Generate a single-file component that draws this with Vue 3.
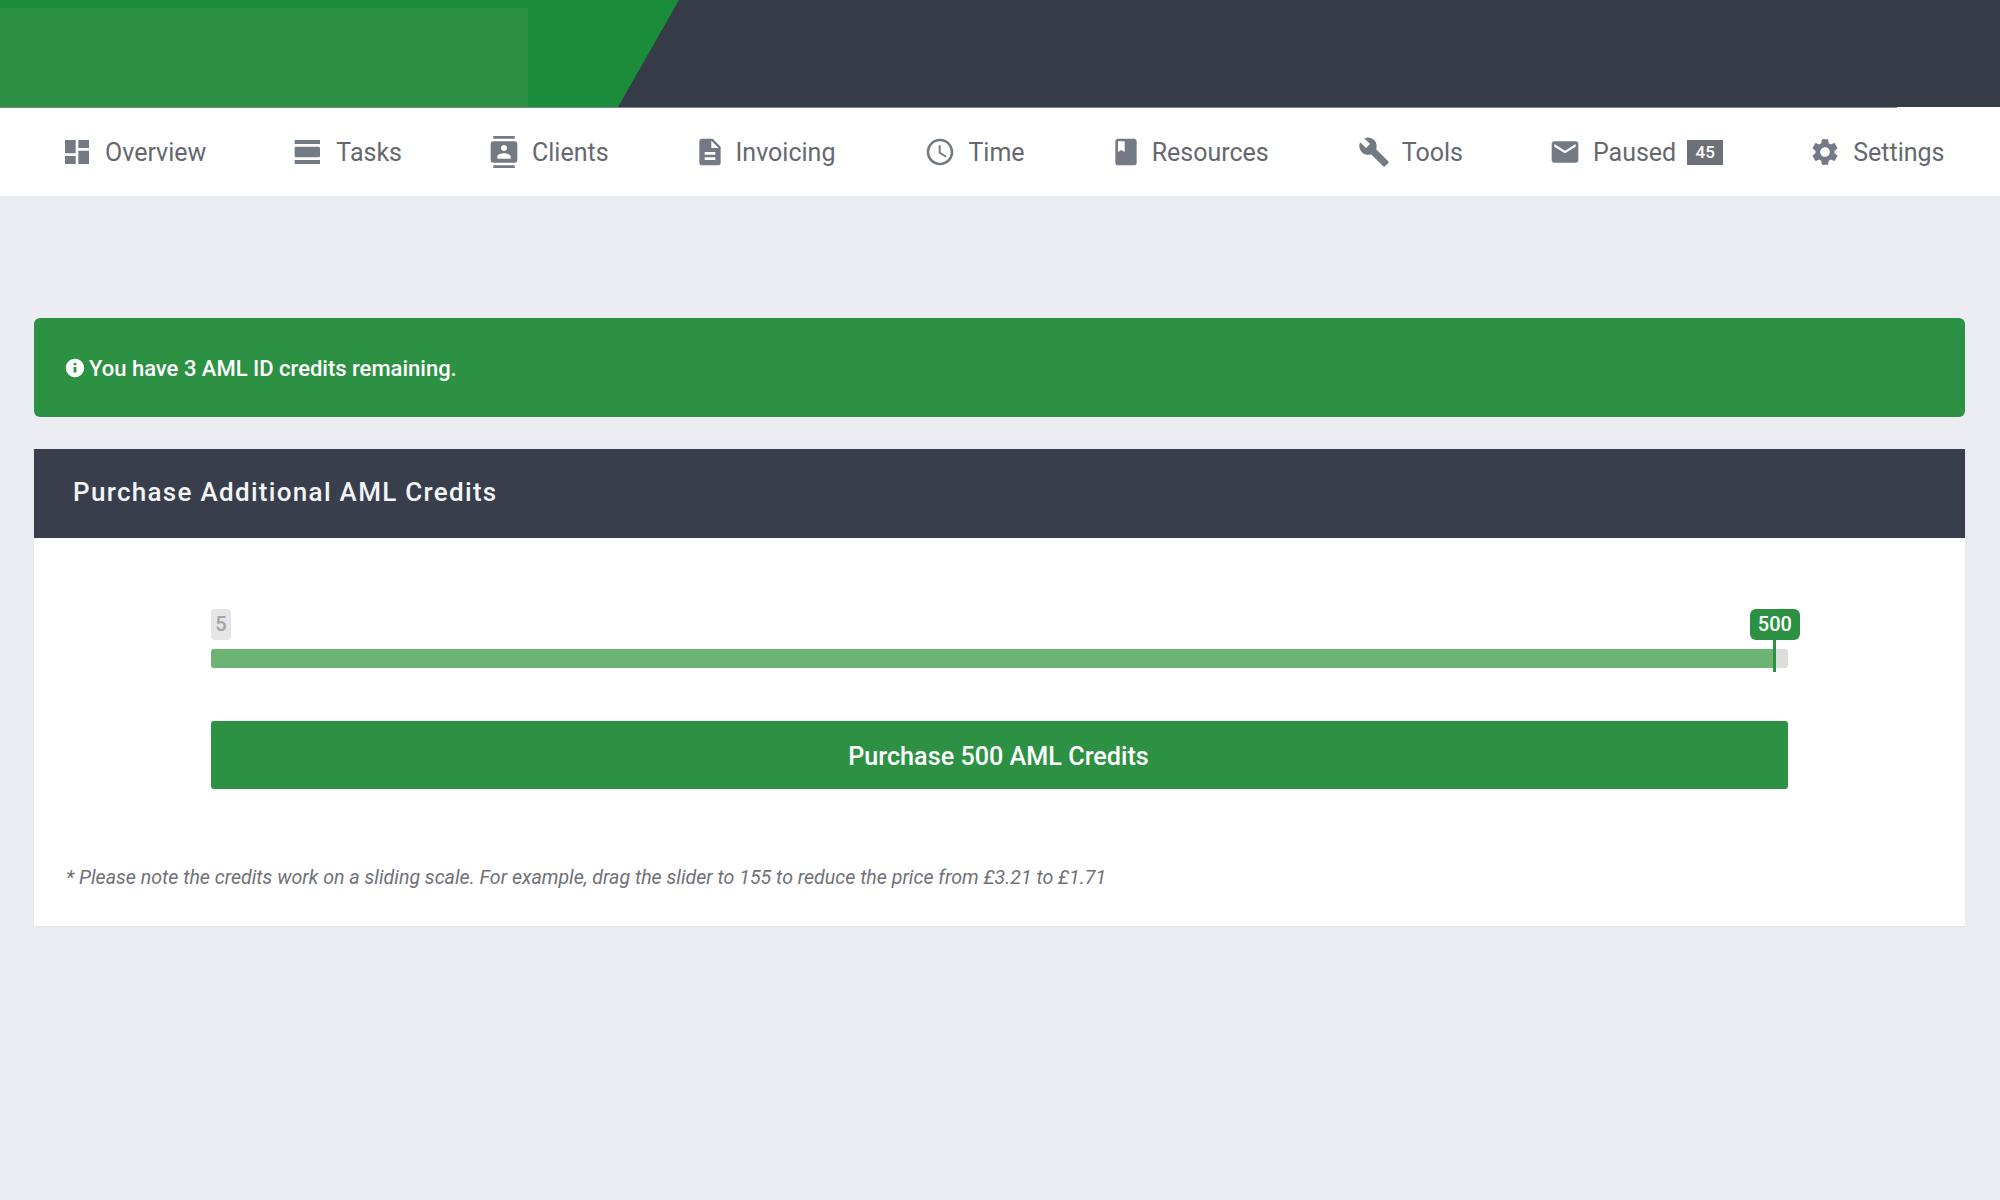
<template>
  <div class="page">
    <header class="top">
      <div class="top__brand">
        <div class="top__logo"></div>
      </div>
    </header>
    <div class="top__line"></div>

    <nav class="nav">
      <a
        v-for="item in navItems"
        :key="item.label"
        class="nav__item"
        :class="{ 'nav__item--narrow': item.narrow }"
      >
        <svg class="nav__icon" viewBox="0 0 24 24"><path :d="item.icon" /></svg>
        <span>{{ item.label }}</span>
        <span v-if="item.badge" class="nav__badge">{{ item.badge }}</span>
      </a>
    </nav>

    <main class="content">
      <div class="alert">
        <svg class="alert__icon" viewBox="0 0 24 24">
          <path d="M12 2C6.48 2 2 6.48 2 12s4.48 10 10 10 10-4.48 10-10S17.52 2 12 2zm1.5 15h-3v-6h3v6zm0-8h-3V6.5h3V9z" />
        </svg>
        <span>You have {{ credits }} AML ID credits remaining.</span>
      </div>

      <section class="card">
        <h2 class="card__title">Purchase Additional AML Credits</h2>
        <div class="card__body">
          <div class="slider">
            <div class="slider__labels">
              <span class="slider__min">{{ min }}</span>
            </div>
            <div class="slider__track">
              <div class="slider__fill" :style="{ width: percent + '%' }"></div>
              <div class="slider__handle" :style="{ left: percent + '%' }">
                <span class="slider__value">{{ value }}</span>
              </div>
            </div>
          </div>
          <button class="buy">Purchase {{ value }} AML Credits</button>
          <p class="note">
            * Please note the credits work on a sliding scale. For example, drag
            the slider to 155 to reduce the price from £3.21 to £1.71
          </p>
        </div>
      </section>
    </main>
  </div>
</template>

<script setup>
import { ref } from "vue";

const credits = ref(3);
const min = ref(5);
const value = ref(500);
const percent = ref(99.2);

const navItems = [
  {
    label: "Overview",
    icon: "M3 13h8V3H3v10zm0 8h8v-6H3v6zm10 0h8V11h-8v10zm0-18v6h8V3h-8z",
  },
  {
    label: "Tasks",
    icon: "M2 21h19v-3H2v3zM20 8H3c-.55 0-1 .45-1 1v6c0 .55.45 1 1 1h17c.55 0 1-.45 1-1V9c0-.55-.45-1-1-1zM2 3v3h19V3H2z",
  },
  {
    label: "Clients",
    icon: "M20 0H4v2h16V0zM4 24h16v-2H4v2zM20 4H4c-1.1 0-2 .9-2 2v12c0 1.1.9 2 2 2h16c1.1 0 2-.9 2-2V6c0-1.1-.9-2-2-2zm-8 2.75c1.24 0 2.25 1.01 2.25 2.25s-1.01 2.25-2.25 2.25S9.75 10.24 9.75 9 10.76 6.75 12 6.75zM17 17H7v-1.5c0-1.67 3.33-2.5 5-2.5s5 .83 5 2.5V17z",
  },
  {
    label: "Invoicing",
    narrow: true,
    icon: "M14 2H6c-1.1 0-1.99.9-1.99 2L4 20c0 1.1.89 2 1.99 2H18c1.1 0 2-.9 2-2V8l-6-6zm2 16H8v-2h8v2zm0-4H8v-2h8v2zm-3-5V3.5L18.5 9H13z",
  },
  {
    label: "Time",
    icon: "M11.99 2C6.47 2 2 6.48 2 12s4.47 10 9.99 10C17.52 22 22 17.52 22 12S17.52 2 11.99 2zM12 20c-4.42 0-8-3.58-8-8s3.58-8 8-8 8 3.58 8 8-3.58 8-8 8zM12.5 7H11v6l5.25 3.15.75-1.23-4.5-2.67z",
  },
  {
    label: "Resources",
    narrow: true,
    icon: "M18 2H6c-1.1 0-2 .9-2 2v16c0 1.1.9 2 2 2h12c1.1 0 2-.9 2-2V4c0-1.1-.9-2-2-2zM6 4h5v8l-2.5-1.5L6 12V4z",
  },
  {
    label: "Tools",
    icon: "M22.7 19l-9.1-9.1c.9-2.3.4-5-1.5-6.9-2-2-5-2.4-7.4-1.3L9 6 6 9 1.6 4.7C.4 7.1.9 10.1 2.9 12.1c1.9 1.9 4.6 2.4 6.9 1.5l9.1 9.1c.4.4 1 .4 1.4 0l2.3-2.3c.5-.4.5-1.1.1-1.4z",
  },
  {
    label: "Paused",
    badge: 45,
    icon: "M20 4H4c-1.1 0-1.99.9-1.99 2L2 18c0 1.1.9 2 2 2h16c1.1 0 2-.9 2-2V6c0-1.1-.9-2-2-2zm0 4l-8 5-8-5V6l8 5 8-5v2z",
  },
  {
    label: "Settings",
    icon: "M19.14 12.94c.04-.3.06-.61.06-.94 0-.32-.02-.64-.07-.94l2.03-1.58c.18-.14.23-.41.12-.61l-1.92-3.32c-.12-.22-.37-.29-.59-.22l-2.39.96c-.5-.38-1.03-.7-1.62-.94l-.36-2.54c-.04-.24-.24-.41-.48-.41h-3.84c-.24 0-.43.17-.47.41l-.36 2.54c-.59.24-1.13.57-1.62.94l-2.39-.96c-.22-.08-.47 0-.59.22L2.74 8.87c-.12.21-.08.47.12.61l2.03 1.58c-.05.3-.09.63-.09.94s.02.64.07.94l-2.03 1.58c-.18.14-.23.41-.12.61l1.92 3.32c.12.22.37.29.59.22l2.39-.96c.5.38 1.03.7 1.62.94l.36 2.54c.05.24.24.41.48.41h3.84c.24 0 .44-.17.47-.41l.36-2.54c.59-.24 1.13-.56 1.62-.94l2.39.96c.22.08.47 0 .59-.22l1.92-3.32c.12-.22.07-.47-.12-.61l-2.01-1.58zM12 15.6c-1.98 0-3.6-1.62-3.6-3.6s1.62-3.6 3.6-3.6 3.6 1.62 3.6 3.6-1.62 3.6-3.6 3.6z",
  },
];
</script>

<style>
body {
  background: #ecedf2;
}
</style>

<style scoped>
.page {
  min-height: 1200px;
  background: #ecedf2;
  font-family: Roboto, "Liberation Sans", sans-serif;
}
.top {
  height: 107px;
  background: #363b48;
}
.top__brand {
  width: 679px;
  height: 107px;
  padding-top: 8px;
  box-sizing: border-box;
  background: #1b8c3a;
  clip-path: polygon(0 0, 100% 0, 618px 100%, 0 100%);
}
.top__logo {
  width: 528px;
  height: 99px;
  background: #2d9144;
}
.top__line {
  width: 1897px;
  height: 1px;
  background: #7d828d;
  box-shadow: 103px 0 0 #fff;
}
.nav {
  height: 88px;
  padding-left: 61px;
  box-sizing: border-box;
  display: flex;
  align-items: center;
  gap: 86px;
  background: #fff;
}
.nav__item {
  display: flex;
  align-items: center;
  gap: 12px;
  font-size: 25px;
  color: #66686f;
}
.nav__item--narrow {
  margin-right: 3px;
}
.nav__item--narrow .nav__icon {
  margin: 0 -2px 0 -1px;
}
.nav__icon {
  width: 32px;
  height: 32px;
  flex-shrink: 0;
  fill: #737a84;
}
.nav__badge {
  margin-left: -1px;
  width: 36px;
  height: 25px;
  display: flex;
  align-items: center;
  justify-content: center;
  background: #6c7079;
  color: #fff;
  font-size: 17px;
  font-weight: 500;
}
.content {
  padding: 122px 35px 0 34px;
}
.alert {
  height: 99px;
  padding: 1px 0 0 30px;
  box-sizing: border-box;
  display: flex;
  align-items: center;
  gap: 3px;
  border-radius: 6px;
  background: #2d9144;
  color: #fff;
  font-size: 22px;
  font-weight: 500;
}
.alert__icon {
  width: 22px;
  height: 22px;
  fill: #fff;
}
.card {
  margin-top: 32px;
  background: #fff;
  box-shadow: 0 1px 3px rgba(0, 0, 0, 0.05);
}
.card__title {
  margin: 0;
  height: 89px;
  padding: 0 0 3px 39px;
  box-sizing: border-box;
  display: flex;
  align-items: center;
  background: #393e4c;
  color: #f4f5f7;
  font-size: 26px;
  font-weight: 500;
  letter-spacing: 1.3px;
}
.card__body {
  padding: 71px 32px 37px;
  height: 388px;
  box-sizing: border-box;
}
.slider {
  margin: 0 145px;
}
.slider__labels {
  height: 31px;
  margin-bottom: 9px;
}
.slider__min {
  display: inline-block;
  width: 20px;
  height: 31px;
  line-height: 31px;
  text-align: center;
  border-radius: 4px;
  background: #e6e6e8;
  color: #a3a3a6;
  font-size: 20px;
  font-weight: 500;
}
.slider__track {
  position: relative;
  height: 19px;
  border-radius: 3px;
  background: #dcdddb;
}
.slider__fill {
  height: 100%;
  border-radius: 3px 0 0 3px;
  background: #6db374;
}
.slider__handle {
  position: absolute;
  top: -9px;
  width: 3px;
  height: 32px;
  margin-left: -2px;
  background: #2d9144;
}
.slider__value {
  position: absolute;
  bottom: 100%;
  left: 50%;
  transform: translateX(-50%);
  width: 50px;
  height: 31px;
  line-height: 31px;
  text-align: center;
  border-radius: 6px;
  background: #2d9144;
  color: #fff;
  font-size: 20px;
  font-weight: 500;
}
.buy {
  display: block;
  width: 1577px;
  height: 68px;
  margin: 53px 0 0 145px;
  padding: 2px 2px 0 0;
  border: none;
  border-radius: 3px;
  background: #2d9144;
  color: #fff;
  font-family: inherit;
  font-size: 25.2px;
  font-weight: 500;
}
.note {
  margin: 77px 0 0;
  color: #6f7178;
  font-size: 19.6px;
  font-style: italic;
}
</style>
